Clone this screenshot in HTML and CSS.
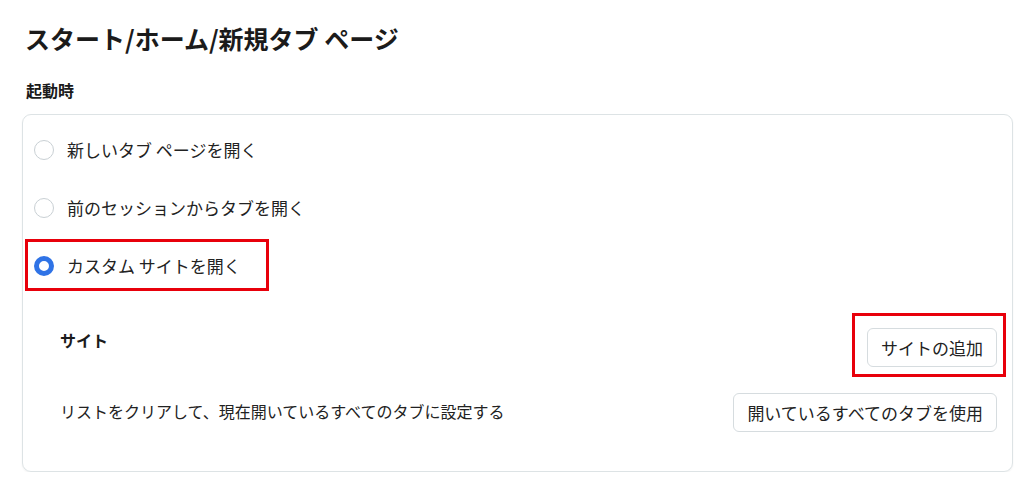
FILE: index.html
```html
<!DOCTYPE html>
<html lang="ja">
  <head>
    <meta charset="UTF-8" />
    <meta name="viewport" content="width=device-width, initial-scale=1.0" />
    <title>スタート/ホーム/新規タブ ページ</title>
    <link rel="stylesheet" href="styles.css">
  </head>
  <body>
    <div class="page">
      <h1 class="page-title">スタート/ホーム/新規タブ ページ</h1>
      <h2 class="section-title">起動時</h2>

      <div class="card">
        <!-- 起動時の動作 -->
        <label class="radio-row">
          <span class="radio"></span>
          <span class="radio-label">新しいタブ ページを開く</span>
        </label>
        <label class="radio-row">
          <span class="radio"></span>
          <span class="radio-label">前のセッションからタブを開く</span>
        </label>
        <label class="radio-row">
          <span class="highlight highlight-radio">
            <span class="radio checked"></span>
            <span class="radio-label">カスタム サイトを開く</span>
          </span>
        </label>

        <!-- サイト -->
        <div class="sites">
          <div class="sites-row">
            <span class="sites-title">サイト</span>
            <span class="highlight highlight-button">
              <button class="btn">サイトの追加</button>
            </span>
          </div>
          <div class="sites-row center">
            <span class="sites-text">リストをクリアして、現在開いているすべてのタブに設定する</span>
            <button class="btn">開いているすべてのタブを使用</button>
          </div>
        </div>
      </div>
    </div>
  </body>
</html>
```

FILE: styles.css
```css
* {
  box-sizing: border-box;
}

body {
  margin: 0;
  background: #ffffff;
  color: #1b1b1b;
  font-family: "Noto Sans CJK JP", "Noto Sans", sans-serif;
}

.page {
  padding: 23px 11px 0 22px;
}

.page-title {
  margin: 0;
  padding-left: 3px;
  font-size: 25px;
  line-height: 30px;
  font-weight: bold;
}

.section-title {
  margin: 27px 0 14px;
  padding-left: 4px;
  font-size: 16px;
  line-height: 20px;
  font-weight: bold;
}

.card {
  border: 1px solid #dde3e5;
  border-radius: 9px;
  padding: 6px 15px 39px 11px;
  box-shadow: 0 1px 2px rgba(0, 0, 0, 0.06);
}

.radio-row {
  display: flex;
  align-items: center;
  height: 58px;
}

.radio {
  width: 20px;
  height: 20px;
  border: 1px solid #c9d0d4;
  border-radius: 50%;
  flex-shrink: 0;
}

.radio.checked {
  border: 5px solid #2f73e6;
  background: #ffffff;
}

.radio-label {
  margin-left: 13px;
  font-size: 17px;
  line-height: 24px;
  color: #222;
}

.highlight {
  display: inline-flex;
  align-items: center;
  outline: 3px solid #e8000b;
}

.highlight-radio {
  padding: 12px 25px 10px 6px;
  margin: -12px -25px -10px -6px;
}

.highlight-button {
  padding: 12px 6px 7px 12px;
  margin: -12px -6px -7px -12px;
}

.sites {
  padding-left: 26px;
  margin-top: 33px;
}

.sites-row {
  display: flex;
  justify-content: space-between;
  align-items: flex-start;
}

.sites-row.center {
  align-items: center;
  margin-top: 26px;
}

.sites-title {
  margin-top: 2px;
  font-size: 16px;
  line-height: 20px;
  font-weight: bold;
}

.sites-text {
  font-size: 16px;
  line-height: 20px;
  color: #222;
  margin-top: -3px;
}

.btn {
  height: 39px;
  padding: 0 13px;
  background: #ffffff;
  border: 1px solid #d6dcdf;
  border-radius: 6px;
  font-family: inherit;
  font-size: 17px;
  color: #222;
  cursor: pointer;
}

.btn:hover {
  background: #f5f7f8;
}
```
